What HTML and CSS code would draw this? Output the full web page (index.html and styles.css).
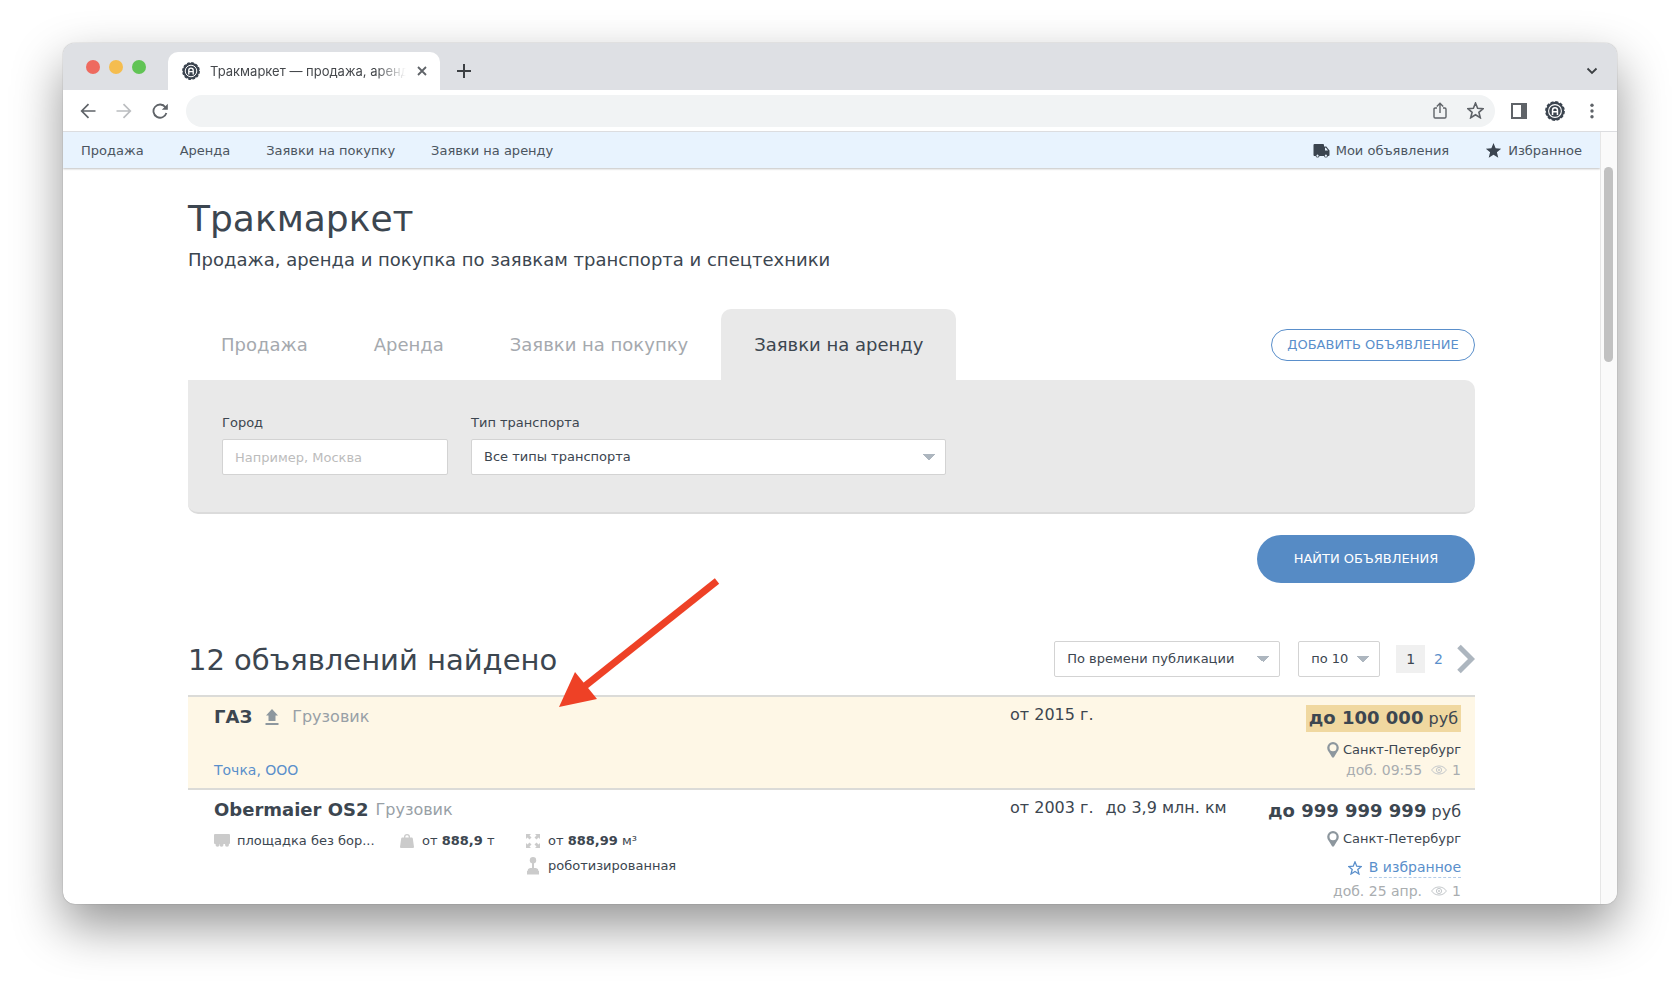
FILE: index.html
```
<!DOCTYPE html>
<html lang="ru">
<head>
<meta charset="utf-8">
<title>Тракмаркет — продажа, аренда</title>
<link rel="stylesheet" href="styles.css">
</head>
<body>
<svg class="sprite" aria-hidden="true">
  <symbol id="brand" viewBox="0 0 20 20"><circle cx="10" cy="10" r="9.200" fill="currentColor"/><circle cx="10" cy="10" r="9.100" fill="none" stroke="currentColor" stroke-width="1.600" stroke-dasharray="3 1.765"/><circle cx="10" cy="10" r="6.400" fill="none" stroke="#fff" stroke-width="1.100"/><path d="M6.800 14V9.300a3.200 3.200 0 0 1 6.400 0V14h-1.500v-2.600H8.300V14zM8.300 10h3.400v-.7a1.700 1.700 0 0 0-3.400 0z" fill="#fff"/></symbol>
  <symbol id="pin" viewBox="0 0 12 16"><path fill="currentColor" fill-rule="evenodd" d="M6 0a5.800 5.800 0 0 1 5.800 5.800C11.800 9 9.500 10.500 8.300 13L6.800 15.500H5.200L3.700 13C2.500 10.500.2 9 .2 5.800A5.800 5.800 0 0 1 6 0zm0 2.300a3.500 3.500 0 1 0 0 7 3.500 3.500 0 0 0 0-7z"/></symbol>
  <symbol id="eye" viewBox="0 0 16 10"><path fill="none" stroke="currentColor" d="M.6 5C4-.4 12-.4 15.400 5 12 10.400 4 10.400.6 5z"/><circle cx="8" cy="5" r="2.600" fill="none" stroke="currentColor"/><circle cx="8" cy="5" r="1" fill="currentColor"/></symbol>
  <symbol id="star" viewBox="0 0 16 16"><path d="M8 1l2 4.900 5.200.4-4 3.400 1.300 5.100L8 12l-4.500 2.800 1.300-5.100-4-3.400L6 5.900z"/></symbol>
</svg>
<div class="window">
  <div class="tabstrip">
    <div class="lights"><i class="light red"></i><i class="light yellow"></i><i class="light green"></i></div>
    <div class="browser-tab">
      <svg class="brand-icon"><use href="#brand"/></svg>
      <span class="tab-title">Тракмаркет — продажа, аренда</span>
      <button class="icon-button" aria-label="Закрыть вкладку"><svg width="12" height="12" viewBox="0 0 12 12"><path d="M2 2l8 8M10 2l-8 8" stroke="currentColor" stroke-width="1.800"/></svg></button>
    </div>
    <button class="icon-button new-tab" aria-label="Новая вкладка"><svg width="14" height="14" viewBox="0 0 14 14"><path d="M7 0v14M0 7h14" stroke="currentColor" stroke-width="2"/></svg></button>
    <button class="icon-button tab-list" aria-label="Список вкладок"><svg width="12" height="8" viewBox="0 0 12 8"><path d="M1.500 1.500L6 6l4.500-4.500" fill="none" stroke="currentColor" stroke-width="1.800"/></svg></button>
  </div>
  <div class="toolbar">
    <button class="icon-button" aria-label="Назад"><svg width="16" height="16" viewBox="0 0 16 16"><path d="M15.500 8H2M8.500 1.200L1.700 8l6.800 6.800" fill="none" stroke="currentColor" stroke-width="1.700"/></svg></button>
    <button class="icon-button faded" aria-label="Вперёд"><svg width="16" height="16" viewBox="0 0 16 16"><path d="M.5 8H14M7.500 1.200L14.300 8l-6.800 6.800" fill="none" stroke="currentColor" stroke-width="1.700"/></svg></button>
    <button class="icon-button" aria-label="Обновить"><svg width="16" height="16" viewBox="0 0 16 16"><path d="M13.400 4.200A6.600 6.600 0 1 0 14.400 10" fill="none" stroke="currentColor" stroke-width="1.800"/><path d="M15.800.8v6H9.800z" fill="currentColor"/></svg></button>
    <div class="address">
      <input class="address-input" type="text" aria-label="Адрес">
      <button class="icon-button" aria-label="Поделиться"><svg width="14" height="17" viewBox="0 0 14 17"><path d="M4 6H2.200Q1 6 1 7.200v7.600Q1 16 2.200 16h9.600q1.200 0 1.200-1.200V7.200Q13 6 11.800 6H10M7 11V1.500M3.800 4.500L7 1.300l3.200 3.200" fill="none" stroke="currentColor" stroke-width="1.400"/></svg></button>
      <button class="icon-button" aria-label="В закладки"><svg class="outline-star" width="17" height="17"><use href="#star"/></svg></button>
    </div>
    <button class="icon-button" aria-label="Боковая панель"><svg width="16" height="16" viewBox="0 0 16 16"><path d="M1 1h14v14H1z" fill="none" stroke="currentColor" stroke-width="2"/><path d="M10 1h5v14h-5z" fill="currentColor"/></svg></button>
    <button class="icon-button profile" aria-label="Профиль"><svg width="20" height="20"><use href="#brand"/></svg></button>
    <button class="icon-button" aria-label="Меню"><svg width="16" height="16" viewBox="0 0 16 16" fill="currentColor"><circle cx="8" cy="2.300" r="1.700"/><circle cx="8" cy="8" r="1.700"/><circle cx="8" cy="13.700" r="1.700"/></svg></button>
  </div>
  <div class="viewport">
    <div class="page">
      <nav class="topnav">
        <a href="#">Продажа</a><a href="#">Аренда</a><a href="#">Заявки на покупку</a><a href="#">Заявки на аренду</a>
        <a href="#" class="mine"><svg width="17" height="14" viewBox="0 0 16 14" fill="currentColor"><path fill-rule="evenodd" d="M1 0h8.500q1 0 1 1v1.500h2.300L16 6.500V11q0 1-1 1h-.6a2 2 0 0 1-3.900 0H6a2 2 0 0 1-3.900 0H1q-1 0-1-1V1q0-1 1-1zm10.500 3.800v2.700h3L12.400 3.800zM4 10.600a1.100 1.100 0 1 0 .01 0zm8.400 0a1.100 1.100 0 1 0 .01 0z"/></svg>Мои объявления</a>
        <a href="#"><svg width="17" height="17" fill="currentColor"><use href="#star"/></svg>Избранное</a>
      </nav>
      <main class="content">
        <h1>Тракмаркет</h1>
        <p class="lead">Продажа, аренда и покупка по заявкам транспорта и спецтехники</p>
        <div class="sections">
          <a href="#">Продажа</a><a href="#">Аренда</a><a href="#">Заявки на покупку</a><a href="#" class="active">Заявки на аренду</a>
          <button class="add">ДОБАВИТЬ ОБЪЯВЛЕНИЕ</button>
        </div>
        <form class="filters">
          <div class="field city"><label for="city">Город</label><input id="city" type="text" placeholder="Например, Москва"></div>
          <div class="field kind"><label for="kind">Тип транспорта</label><select id="kind"><option>Все типы транспорта</option></select></div>
        </form>
        <div class="submit"><button class="find">НАЙТИ ОБЪЯВЛЕНИЯ</button></div>
        <div class="results-head">
          <h2>12 объявлений найдено</h2>
          <select class="sort" aria-label="Сортировка"><option>По времени публикации</option></select>
          <select class="per-page" aria-label="На странице"><option>по 10</option></select>
          <div class="pager"><span class="current">1</span><a href="#">2</a><a href="#" class="next" aria-label="Дальше"><svg width="18" height="30" viewBox="0 0 18 30"><path d="M2 2.500L14.500 15 2 27.500" fill="none" stroke="#adb6bf" stroke-width="5"/></svg></a></div>
        </div>
        <article class="offer promoted">
          <div class="about">
            <div class="title"><b>ГАЗ</b><svg class="raised" width="14" height="16" viewBox="0 0 14 16" fill="currentColor"><path d="M7 0l6 6.500H10.500V12h-7V6.500H1zM.5 14h13v2H.5z"/></svg><span>Грузовик</span></div>
            <a href="#" class="seller">Точка, ООО</a>
          </div>
          <div class="usage"><span>от 2015 г.</span></div>
          <div class="deal">
            <div class="price"><b>до 100 000</b> руб</div>
            <div class="place"><svg width="12" height="16"><use href="#pin"/></svg>Санкт-Петербург</div>
            <div class="added">доб. 09:55<svg width="16" height="10"><use href="#eye"/></svg>1</div>
          </div>
        </article>
        <article class="offer">
          <div class="about">
            <div class="title"><b>Obermaier OS2</b><span>Грузовик</span></div>
            <div class="specs">
              <div class="spec"><svg width="16" height="14" viewBox="0 0 16 14" fill="currentColor"><path d="M1 0h14q1 0 1 1v8q0 1-1 1H1q-1 0-1-1V1q0-1 1-1z"/><circle cx="3.500" cy="10.800" r="2"/><circle cx="7.500" cy="10.800" r="2"/><circle cx="13" cy="10.800" r="2"/></svg>площадка без бор...</div>
              <div class="spec"><svg width="16" height="16" viewBox="0 0 16 16" fill="currentColor"><path fill-rule="evenodd" d="M5 4.500V4a3 3 0 0 1 6 0v.5h1.700q1 0 1.100 1L15 14q0 1-1 1H2q-1 0-1-1l1.200-8.500q.1-1 1.100-1zm1.300 0h3.400V4a1.700 1.700 0 0 0-3.400 0z"/></svg>от&nbsp;<b>888,9</b>&nbsp;т</div>
              <div class="spec"><svg width="16" height="16" viewBox="0 0 16 16" fill="currentColor"><path d="M1 1h5L4.500 2.500l2 2-2 2-2-2L1 6zM15 1v5l-1.500-1.500-2 2-2-2 2-2L10 1zM1 15v-5l1.500 1.500 2-2 2 2-2 2L6 15zM15 15h-5l1.500-1.500-2-2 2-2 2 2L15 10z"/></svg>от&nbsp;<b>888,99</b>&nbsp;м³</div>
              <div class="spec gearbox"><svg width="16" height="18" viewBox="0 0 16 18" fill="currentColor"><circle cx="8" cy="3.200" r="3.200"/><path d="M7 5h2v6h2q2.500.5 2.500 3H14v3.500H2V14h.5q0-2.500 2.500-3h2z"/></svg>роботизированная</div>
            </div>
          </div>
          <div class="usage"><span>от 2003 г.</span><span>до 3,9 млн. км</span></div>
          <div class="deal">
            <div class="price"><b>до 999 999 999</b> руб</div>
            <div class="place"><svg width="12" height="16"><use href="#pin"/></svg>Санкт-Петербург</div>
            <button class="favourite"><svg class="outline-star" width="14" height="14"><use href="#star"/></svg><span>В избранное</span></button>
            <div class="added">доб. 25 апр.<svg width="16" height="10"><use href="#eye"/></svg>1</div>
          </div>
        </article>
        <svg class="pointer" width="162" height="134" viewBox="0 0 162 134" aria-hidden="true"><path d="M158 3L26 108" stroke="#ee4126" stroke-width="7"/><path d="M0 129L16 94l22 27z" fill="#ee4126"/></svg>
      </main>
    </div>
    <div class="scrollbar"><div class="thumb"></div></div>
  </div>
</div>
</body>
</html>
```
FILE: styles.css
```
* { box-sizing: border-box; }
body { margin: 0; height: 100vh; padding: 43px 63px 84px; display: flex; background: #fff; color: #3c4650; font: 14px/20px "DejaVu Sans", Verdana, sans-serif; overflow: hidden; }
a { color: #5a8fcb; text-decoration: none; }
button, input, select { font: inherit; color: inherit; margin: 0; }
.sprite { position: absolute; width: 0; height: 0; }
.window { flex: 1; min-width: 0; display: flex; flex-direction: column; border-radius: 12px; overflow: hidden; background: #fff; box-shadow: 0 0 1px rgba(0,0,0,.5), 0 22px 50px rgba(0,0,0,.42); }
.icon-button { display: flex; align-items: center; justify-content: center; border: 0; padding: 0; background: none; color: #5f6368; }

.tabstrip { height: 47px; flex: none; display: flex; align-items: flex-end; background: #dee0e4; padding-right: 19px; }
.lights { display: flex; gap: 9px; padding: 0 22px 16px 23px; }
.light { width: 14px; height: 14px; border-radius: 50%; }
.red { background: #ee6a5f; }
.yellow { background: #f5bd4f; }
.green { background: #61c455; }
.browser-tab { width: 272px; height: 38px; border-radius: 10px 10px 0 0; background: #fff; display: flex; align-items: center; padding: 0 12px 0 14px; }
.brand-icon { width: 18px; height: 18px; flex: none; color: #3b444f; }
.tab-title { flex: 1; min-width: 0; overflow: hidden; white-space: nowrap; margin: 0 10px 0 10px; color: #45484c; font: 13px/20px Inter, sans-serif; mask-image: linear-gradient(to right, #000 85%, transparent); }
.new-tab { margin: 0 0 12px 17px; color: #3c4043; }
.tab-list { margin: 0 0 15px auto; color: #3c4043; }
.toolbar { height: 42px; flex: none; display: flex; align-items: center; gap: 20px; padding: 0 17px; border-bottom: 1px solid #dcdde0; }
.faded { color: #bbbdc0; }
.address { flex: 1; height: 32px; border-radius: 16px; background: #f1f3f4; display: flex; align-items: center; gap: 20px; padding-right: 11px; margin: 0 -4px 0 -2px; }
.address-input { flex: 1; border: 0; background: none; padding: 0 16px; outline: 0; }
.outline-star { fill: none; stroke: currentColor; stroke-width: 1.500; }
.profile { color: #3b444f; margin: 0 -1px 0 -2px; }

.viewport { flex: 1; min-height: 0; display: flex; }
.page { flex: 1; min-width: 0; overflow: hidden; }
.scrollbar { width: 17px; border-left: 1px solid #e6e6e6; background: #fafafa; padding: 35px 3px 0 3px; }
.thumb { width: 9px; height: 195px; border-radius: 5px; background: #c1c1c1; }
.topnav { height: 36px; display: flex; align-items: center; gap: 36px; padding: 1px 18px 0; background: #e8f3fe; box-shadow: 0 1px 2px rgba(0,0,0,.25); font-size: 13px; }
.topnav a { color: #4b5560; display: flex; align-items: center; gap: 6px; }
.topnav svg { color: #3b444f; }
.mine { margin-left: auto; }

.content { position: relative; padding: 27px 125px 0; }
h1, h2, p { margin: 0; font-weight: 400; }
h1 { font-size: 36px; line-height: 48px; }
.lead { font-size: 18px; line-height: 24px; margin-top: 5px; }
.sections { display: flex; margin-top: 37px; align-items: center; font-size: 18px; }
.sections a { color: #a5a9ae; line-height: 71px; padding: 0 33px; }
.sections .active { color: #3c4650; background: #e9e9e9; border-radius: 10px 10px 0 0; }
.add { margin-left: auto; height: 32px; min-width: 204px; border: 1px solid #5a8fcb; border-radius: 16px; background: none; color: #5a8fcb; font-size: 13px; padding: 0 13px; }
.filters { display: flex; gap: 23px; background: #e9e9e9; border-bottom: 2px solid #dbdbdb; border-radius: 0 10px 10px 10px; padding: 33px 34px 37px; }
.field { display: flex; flex-direction: column; gap: 6px; }
.city { width: 226px; }
.kind { width: 475px; }
.field input, select { height: 36px; border: 1px solid #d3d3d3; border-radius: 2px; background: #fff; padding: 0 12px; font-size: 13px; }
.field label { font-size: 13px; }
input::placeholder { color: #bcbcbc; opacity: 1; }
select { appearance: none; background: #fff conic-gradient(from -45deg at 50% 100%, #adb6bf 90deg, transparent 0) no-repeat right 10px center / 12px 6px; }
.submit { display: flex; justify-content: flex-end; margin-top: 21px; }
.find { height: 48px; min-width: 218px; border: 0; border-radius: 24px; background: #568bc5; color: #fff; font-size: 13px; padding: 0 32px; }
.results-head { display: flex; align-items: center; margin-top: 57px; margin-bottom: 17px; }
h2 { flex: 1; font-size: 29px; line-height: 36px; padding-top: 2px; }
.sort { width: 226px; margin-right: 18px; }
.per-page { width: 82px; margin-right: 16px; }
.pager { display: flex; align-items: center; font-size: 14px; }
.current { background: #f0f0f0; padding: 4px 10px; line-height: 20px; margin-right: 9px; }
.next { display: flex; margin-left: 14px; }

.offer { display: flex; border-top: 2px solid #dbdbd8; padding: 8px 14px 8px 26px; }
.promoted { background: #fef7e6; }
.about { flex: 1; display: flex; flex-direction: column; }
.title { display: flex; align-items: center; line-height: 24px; font-size: 16px; color: #98a0a6; }
.title b { font-size: 18px; color: #3c4650; margin-right: 7px; }
.raised { margin: 0 13px 0 6px; color: #8d979e; }
.seller { margin-top: auto; }
.usage { width: 248px; display: flex; gap: 12px; font-size: 16px; white-space: nowrap; }
.deal { width: 203px; display: flex; flex-direction: column; align-items: flex-end; white-space: nowrap; }
.price { font-size: 16px; line-height: 26px; }
.price b { font-size: 18px; }
.place { display: flex; align-items: center; gap: 4px; margin-top: 4px; font-size: 13px; }
.place svg { color: #8d979e; }
.promoted .price { background: #f0d8a0; padding: 0 3px; }
.promoted .place { margin-top: 8px; }
.added { display: flex; align-items: center; color: #a9adb0; }
.added svg { margin: 0 5px 0 9px; color: #c4c8cb; }
.favourite { display: flex; align-items: center; gap: 7px; border: 0; padding: 0; background: none; color: #5a8fcb; margin: 8px 0 3px; }
.favourite span { border-bottom: 1px dashed #b5cde8; }
.specs { display: grid; grid-template-columns: 185px 126px 1fr; row-gap: 5px; font-size: 13px; margin-top: 9px; }
.spec { display: flex; align-items: center; }
.spec svg { color: #cbcbcb; margin-right: 7px; }
.gearbox { grid-column: 3; }
.pointer { position: absolute; left: 496px; top: 410px; }
```
